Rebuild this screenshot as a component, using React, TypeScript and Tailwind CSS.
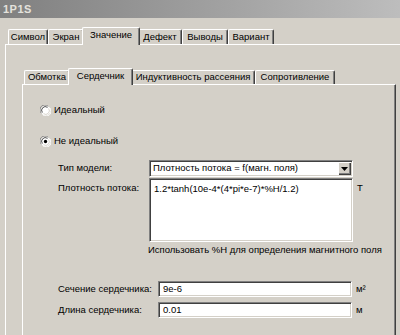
import React from "react";

const font = { fontFamily: '"Liberation Sans", Arial, sans-serif' };

function Tab({ label, w, selected, small }: { label: string; w: number; selected?: boolean; small?: boolean }) {
  const h = selected ? (small ? 17 : 18) : small ? 14 : 15;
  return (
    <div
      className={
        "relative shrink-0 flex items-center justify-center border-l border-t border-white rounded-tl-[2px] rounded-tr-[2px] border-r border-r-[#404040] bg-[#d4d0c8] text-[9.5px] text-black whitespace-nowrap " +
        (selected ? "z-10 -mx-[2px] -mb-px" : "")
      }
      style={{ width: w, height: h, boxShadow: "inset -1px 0 0 #808080" }}
    >
      <span className={selected ? "-mt-[2px]" : ""}>{label}</span>
    </div>
  );
}

function Radio({ checked }: { checked?: boolean }) {
  return (
    <svg width="11" height="11" viewBox="0 0 12 12" className="shrink-0">
      <circle cx="6" cy="6" r="5.5" fill="#ffffff" />
      <path d="M1.5 9 A5 5 0 0 1 9 1.5" stroke="#808080" strokeWidth="1" fill="none" />
      <path d="M2.6 8.2 A4 4 0 0 1 8.2 2.6" stroke="#404040" strokeWidth="1" fill="none" />
      <path d="M10.5 3 A5 5 0 0 1 3 10.5" stroke="#ffffff" strokeWidth="1" fill="none" />
      <path d="M9.4 3.8 A4 4 0 0 1 3.8 9.4" stroke="#d4d0c8" strokeWidth="1" fill="none" />
      {checked && <circle cx="6" cy="6" r="1.8" fill="#000" />}
    </svg>
  );
}

const sunken = {
  boxShadow: "inset 1px 1px 0 #404040, inset -1px -1px 0 #d4d0c8",
};

const fieldCls =
  "bg-white border-t border-l border-[#808080] border-b-white border-r-white border-b border-r";

export default function App() {
  return (
    <div className="w-[400px] h-[335px] overflow-hidden bg-[#d4d0c8] text-black" style={font}>
      {/* Title bar */}
      <div className="h-[18px] flex items-center pl-[3px] bg-gradient-to-r from-[#808080] to-[#bdbdbd]">
        <span className="text-[11px] font-bold text-[#e4e2dc] tracking-[0.5px]">1P1S</span>
      </div>

      {/* Outer tab strip */}
      <div className="mt-[9px] flex items-end pl-[8px] h-[17px]">
        <Tab label="Символ" w={40} />
        <Tab label="Экран" w={36} />
        <Tab label="Значение" w={58} selected />
        <Tab label="Дефект" w={44} />
        <Tab label="Выводы" w={46} />
        <Tab label="Вариант" w={46} />
      </div>

      {/* Outer panel */}
      <div className="ml-[5px] w-[420px] h-[300px] border-l border-t border-white pt-[24px]">
        {/* Inner tab strip */}
        <div className="flex items-end pl-[18px] h-[15px]">
          <Tab label="Обмотка" w={46} small />
          <Tab label="Сердечник" w={65} selected small />
          <Tab label="Индуктивность рассеяния" w={124} small />
          <Tab label="Сопротивление" w={80} small />
        </div>

        {/* Inner panel */}
        <div
          className="ml-[16px] w-[374px] h-[260px] border-l border-t border-white border-r border-r-[#404040] flex flex-col text-[9.5px]"
          style={{ boxShadow: "inset -1px 0 0 #808080" }}
        >
          <div className="mt-[19px] h-[12px] flex items-center pl-[17px] gap-[3px]">
            <Radio />
            <span>Идеальный</span>
          </div>
          <div className="mt-[19px] h-[12px] flex items-center pl-[17px] gap-[3px]">
            <Radio checked />
            <span>Не идеальный</span>
          </div>

          {/* Model type + flux density */}
          <div className="mt-[13px] grid grid-cols-[126px_204px_auto] grid-rows-[17px_64px] gap-y-[1px]">
            <div className="pl-[35px] flex items-center whitespace-nowrap">Тип модели:</div>
            <div className={fieldCls + " flex items-center"} style={sunken}>
              <span className="pl-[3px] flex-1 whitespace-nowrap">Плотность потока = f(магн. поля)</span>
              <div
                className="w-[13px] h-[13px] mr-[1px] bg-[#d4d0c8] flex items-center justify-center"
                style={{ boxShadow: "inset 1px 1px 0 #ffffff, inset -1px -1px 0 #404040, inset -2px -2px 0 #808080" }}
              >
                <svg width="7" height="4" viewBox="0 0 7 4">
                  <path d="M0 0 H7 L3.5 4 Z" fill="#000" />
                </svg>
              </div>
            </div>
            <div />
            <div className="pl-[35px] pt-[3px] whitespace-nowrap">Плотность потока:</div>
            <div className={fieldCls + " pl-[4px] pt-[3px] whitespace-nowrap"} style={sunken}>
              1.2*tanh(10e-4*(4*pi*e-7)*%H/1.2)
            </div>
            <div className="pl-[4px] pt-[3px]">T</div>
          </div>

          <div className="mt-[2px] h-[12px] flex items-center pl-[125px] whitespace-nowrap">
            Использовать %H для определения магнитного поля
          </div>

          {/* Cross section + length */}
          <div className="mt-[25px] grid grid-cols-[135px_194px_auto] grid-rows-[16px_16px] gap-y-[5px]">
            <div className="pl-[35px] flex items-center whitespace-nowrap">Сечение сердечника:</div>
            <div className={fieldCls + " flex items-center pl-[4px]"} style={sunken}>
              9e-6
            </div>
            <div className="pl-[4px] flex items-center">м²</div>
            <div className="pl-[35px] flex items-center whitespace-nowrap">Длина сердечника:</div>
            <div className={fieldCls + " flex items-center pl-[4px]"} style={sunken}>
              0.01
            </div>
            <div className="pl-[4px] flex items-center">м</div>
          </div>
        </div>
      </div>
    </div>
  );
}
